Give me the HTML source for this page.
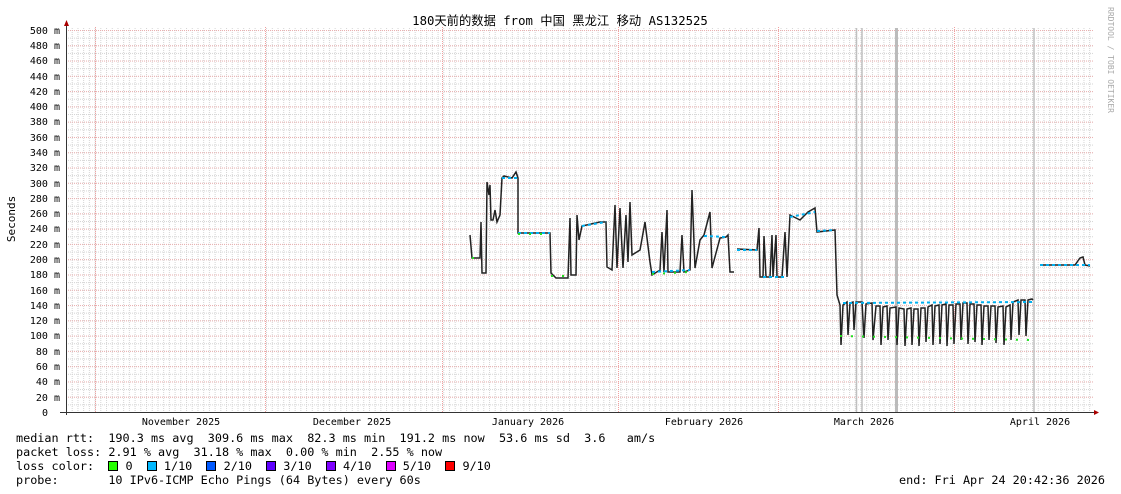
<!DOCTYPE html>
<html><head><meta charset="utf-8"><style>
body{margin:0;background:#fff;width:1121px;height:494px;overflow:hidden;position:relative;font-family:"DejaVu Sans Mono","Liberation Mono",monospace;}
.t{position:absolute;white-space:pre;color:#000;}
.lg{font-size:11.8px;left:16px;line-height:14px;}
.sw{display:inline-block;width:8px;height:8px;border:1px solid #000;vertical-align:-1px;}
</style></head><body>
<svg width="1121" height="494" style="position:absolute;left:0;top:0">
<defs>
<pattern id="vm" x="66" y="0" width="5.716" height="2" patternUnits="userSpaceOnUse"><rect x="0" y="0" width="1" height="1" fill="#d4d4d4"/></pattern>
<pattern id="hm" x="0" y="30" width="2" height="7.64" patternUnits="userSpaceOnUse"><rect x="0" y="0" width="1" height="1" fill="#d4d4d4"/></pattern>
<pattern id="hM" x="0" y="30" width="2" height="15.28" patternUnits="userSpaceOnUse"><rect x="0" y="0" width="1" height="1" fill="#eab0b0"/></pattern>
</defs>
<rect x="67" y="27" width="1026" height="385" fill="url(#vm)"/>
<rect x="67" y="30" width="1026" height="382" fill="url(#hm)"/>
<rect x="67" y="30" width="1026" height="382" fill="url(#hM)"/>
<g stroke="#f0a0a0" stroke-width="1" stroke-dasharray="1 1">
<line x1="95.5" y1="27" x2="95.5" y2="412"/><line x1="265.5" y1="27" x2="265.5" y2="412"/><line x1="442.5" y1="27" x2="442.5" y2="412"/><line x1="618.5" y1="27" x2="618.5" y2="412"/><line x1="778.5" y1="27" x2="778.5" y2="412"/><line x1="954.5" y1="27" x2="954.5" y2="412"/>
</g>
<g stroke="#c0c0c0" stroke-width="1.5"><line x1="856.5" y1="28" x2="856.5" y2="412"/><line x1="862" y1="28" x2="862" y2="412"/><line x1="1034" y1="28" x2="1034" y2="412"/></g>
<line x1="896.5" y1="28" x2="896.5" y2="412" stroke="#bbb" stroke-width="3"/>
<g fill="none" stroke="#222" stroke-width="1.5">
<path d="M470 235 L472 258 L480 258 L481 222 L482 273 L486 273 L487 182 L489 195 L490 185 L491 220 L493 220 L495 210 L497 222 L500 215 L502 178 L504 176 L512 178 L516 172 L518 178 L518 233 L530 233 L550 233 L551 273 L556 278 L568 278 L570 218 L571 275 L576 275 L577 215 L579 240 L582 226 L600 222 L606 222 L607 267 L612 270 L615 205 L617 268 L620 208 L623 268 L626 215 L628 262 L630 202 L632 255 L640 250 L645 222 L650 262 L652 275 L660 270 L662 232 L664 272 L667 210 L668 272 L680 272 L682 235 L684 272 L690 270 L692 190 L695 268 L700 240 L704 235 L710 212 L712 268 L720 238 L726 237 L728 235 L730 272 L734 272 M737 249 L757 250 L759 228 L760 277 L763 277 L764 236 L766 277 L770 277 L772 235 L773 277 L776 235 L777 277 L782 277 L785 232 L787 277 L790 215 L800 220 L808 212 L815 208 L817 232 L835 230 L837 295 L840 305 L841 345 L843 305 L847 302 L848 335 L850 303 L853 302 L854 330 L856 302 L862 302 L864 338 L866 304 L872 303 L873 340 L876 306 L880 306 L881 345 L883 307 L887 306 L888 340 L890 308 L896 307 L897 345 L899 308 L904 309 L905 346 L907 309 L911 308 L912 345 L914 309 L918 309 L919 346 L921 308 L925 308 L926 342 L928 307 L932 305 L933 345 L935 306 L939 305 L940 344 L942 305 L946 304 L947 346 L949 305 L953 305 L954 344 L956 304 L960 304 L961 340 L963 303 L967 303 L968 344 L970 304 L974 304 L975 342 L977 305 L981 305 L982 345 L984 306 L988 306 L989 340 L991 306 L995 306 L996 343 L998 307 L1003 306 L1004 345 L1006 307 L1010 305 L1011 340 L1013 302 L1018 300 L1019 335 L1021 300 L1025 300 L1026 336 L1028 300 L1032 299 L1033 300 M1040 265 L1075 265 L1080 258 L1083 257 L1085 265 L1090 266"/>
</g>
<g fill="none" stroke="#00b0f0" stroke-width="2" stroke-dasharray="3 3">
<path d="M502 178 L518 178 M518 233 L550 233 M582 226 L606 222 M652 272 L690 270 M704 236 L726 237 M737 250 L757 250 M763 277 L785 277 M790 217 L815 212 M817 231 L835 230 M843 303 L1032 302 M1040 265 L1090 265"/>
</g>
<g fill="none" stroke="#20e020" stroke-width="2" stroke-dasharray="2 9">
<path d="M472 258 L480 258 M518 234 L550 234 M551 276 L568 276 M652 274 L690 272 M840 336 L1030 340"/>
</g>
<line x1="66.5" y1="26" x2="66.5" y2="415" stroke="#333"/>
<line x1="60" y1="412.5" x2="1095" y2="412.5" stroke="#333"/>
<polygon points="64,26 69,26 66.5,20" fill="#a00"/>
<polygon points="1094,410 1094,415 1099,412.5" fill="#a00"/>
<g font-family="DejaVu Sans Mono,monospace" font-size="10" text-anchor="end" fill="#000">
<text x="60" y="34">500 m</text><text x="60" y="49">480 m</text><text x="60" y="64">460 m</text><text x="60" y="80">440 m</text><text x="60" y="95">420 m</text><text x="60" y="110">400 m</text><text x="60" y="125">380 m</text><text x="60" y="141">360 m</text><text x="60" y="156">340 m</text><text x="60" y="171">320 m</text><text x="60" y="187">300 m</text><text x="60" y="202">280 m</text><text x="60" y="217">260 m</text><text x="60" y="232">240 m</text><text x="60" y="248">220 m</text><text x="60" y="263">200 m</text><text x="60" y="278">180 m</text><text x="60" y="294">160 m</text><text x="60" y="309">140 m</text><text x="60" y="324">120 m</text><text x="60" y="339">100 m</text><text x="60" y="355">80 m</text><text x="60" y="370">60 m</text><text x="60" y="385">40 m</text><text x="60" y="401">20 m</text><text x="48" y="416">0</text>
</g>
<g font-family="DejaVu Sans Mono,monospace" font-size="10" text-anchor="middle">
<text x="181" y="425">November 2025</text><text x="352" y="425">December 2025</text><text x="528" y="425">January 2026</text><text x="704" y="425">February 2026</text><text x="864" y="425">March 2026</text><text x="1040" y="425">April 2026</text>
</g>
<text x="15" y="219" transform="rotate(-90 15 219)" font-family="DejaVu Sans Mono,monospace" font-size="11" text-anchor="middle">Seconds</text>
<text x="1108" y="60" transform="rotate(90 1108 60)" font-family="DejaVu Sans Mono,monospace" font-size="8" fill="#aaa" text-anchor="middle">RRDTOOL / TOBI OETIKER</text>
<text x="560" y="25" font-family="DejaVu Sans Mono,Noto Sans CJK SC,monospace" font-size="12.3" text-anchor="middle">180天前的数据 from 中国 黑龙江 移动 AS132525</text>
</svg>
<div class="t lg" style="top:431px">median rtt:  190.3 ms avg  309.6 ms max  82.3 ms min  191.2 ms now  53.6 ms sd  3.6   am/s</div>
<div class="t lg" style="top:445px">packet loss: 2.91 % avg  31.18 % max  0.00 % min  2.55 % now</div>
<div class="t lg" style="top:459px">loss color:  <span class="sw" style="background:#26ff00"></span> 0  <span class="sw" style="background:#00b8ff"></span> 1/10  <span class="sw" style="background:#0059ff"></span> 2/10  <span class="sw" style="background:#5e00ff"></span> 3/10  <span class="sw" style="background:#7e00ff"></span> 4/10  <span class="sw" style="background:#dd00ff"></span> 5/10  <span class="sw" style="background:#ff0000"></span> 9/10</div>
<div class="t lg" style="top:473px">probe:       10 IPv6-ICMP Echo Pings (64 Bytes) every 60s</div>
<div class="t lg" style="top:473px;left:auto;right:16px">end: Fri Apr 24 20:42:36 2026</div>
</body></html>
